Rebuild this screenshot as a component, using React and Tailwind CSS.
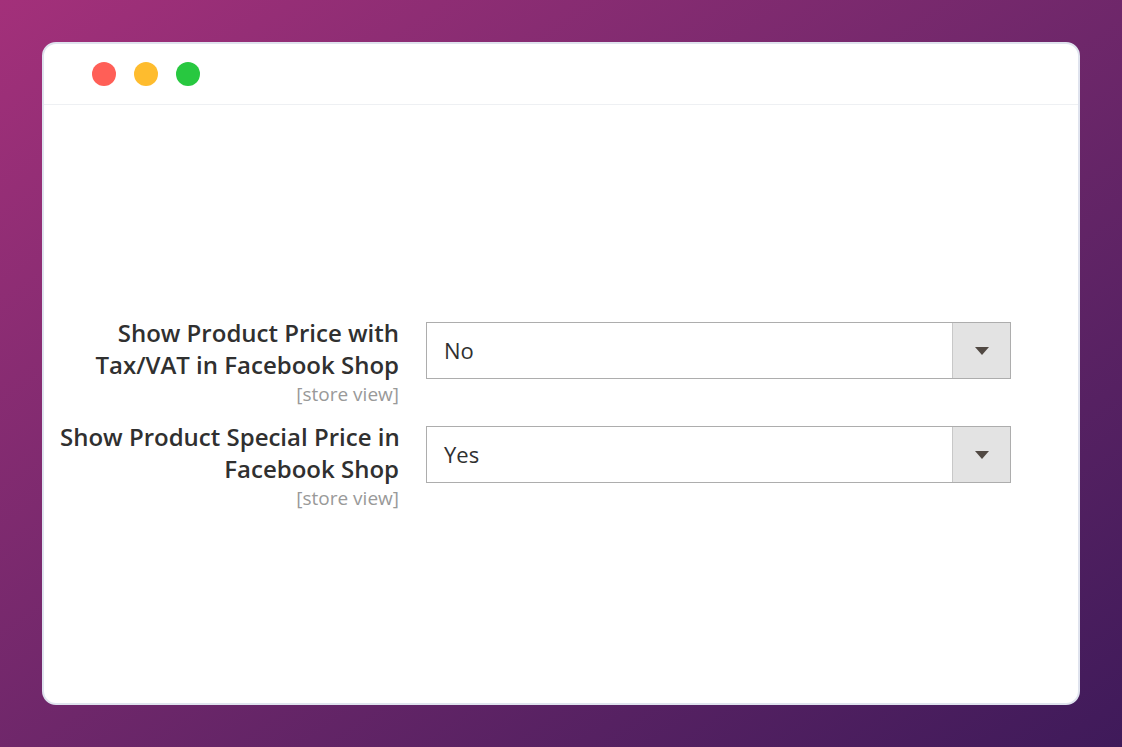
import { useState } from "react";

const rows = [
  { label: ["Show Product Price with", "Tax/VAT in Facebook Shop"], value: "No" },
  { label: ["Show Product Special Price in", "Facebook Shop"], value: "Yes" },
];

function SelectBox({ value }) {
  return (
    <div className="mt-[5px] flex h-[57px] w-[585px] border border-[#adadad] bg-white">
      <div className="flex flex-1 items-center pl-[17px] text-[22px] text-[#303030]">{value}</div>
      <div className="flex w-[58px] items-center justify-center border-l border-[#c8c8c8] bg-[#e3e3e3]">
        <svg width="14" height="8" viewBox="0 0 14 8">
          <path d="M0 0 L14 0 L7 8 Z" fill="#514943" />
        </svg>
      </div>
    </div>
  );
}

export default function App() {
  const [items] = useState(rows);
  return (
    <div
      className="flex h-[747px] w-[1122px] items-start bg-gradient-to-br from-[#a3307a] to-[#3f1a5a] pl-[42px] pt-[42px]"
      style={{ fontFamily: '"Open Sans", sans-serif' }}
    >
      <div className="flex h-[663px] w-[1038px] flex-col rounded-[14px] border-2 border-[#dfe3ee] bg-white">
        <div className="flex h-[61px] items-center gap-[18px] border-b border-[#eef0f3] pl-[48px]">
          <span className="h-[24px] w-[24px] rounded-full bg-[#ff5f57]" />
          <span className="h-[24px] w-[24px] rounded-full bg-[#febc2e]" />
          <span className="h-[24px] w-[24px] rounded-full bg-[#28c840]" />
        </div>
        <div className="flex flex-col gap-[16px] pl-[16px] pt-[212px]">
          {items.map((r) => (
            <div key={r.value} className="flex items-start gap-[27px]">
              <div className="w-[339px] text-right">
                {r.label.map((l) => (
                  <div key={l} className="whitespace-nowrap text-[24px] font-semibold leading-[32px] text-[#303030]">
                    {l}
                  </div>
                ))}
                <div className="mt-[3px] text-[19px] leading-[21px] text-[#999]">[store view]</div>
              </div>
              <SelectBox value={r.value} />
            </div>
          ))}
        </div>
      </div>
    </div>
  );
}
